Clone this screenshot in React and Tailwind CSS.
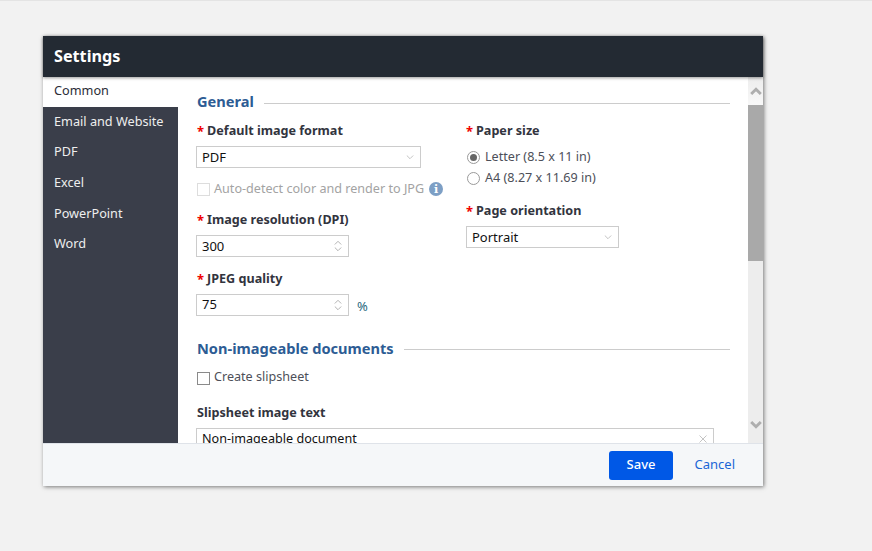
const Chev = ({ up, className, sw = 1, w = 10, h = 6 }) => (
  <svg width={w} height={h} viewBox="0 0 10 6" fill="none" stroke="currentColor" strokeWidth={sw} className={className}>
    <path d={up ? "M1 5.5L5 1.5L9 5.5" : "M1 0.5L5 4.5L9 0.5"} />
  </svg>
);

const Label = ({ children, req = true, className = "" }) => (
  <div className={`flex items-center h-[18px] text-[12.6px] font-bold text-[#32343e] leading-[18px] ${className}`}>
    {req && <span className="text-[#f00000] mr-[3px] text-[13px]">*</span>}
    {children}
  </div>
);

const Select = ({ w, value }) => (
  <div className={`${w} h-[22px] border border-[#cccccc] bg-white flex items-center justify-between pl-[5px] pr-[6px] text-[13px] text-[#111111]`}>
    <span className="mt-[2px]">{value}</span>
    <Chev className="text-[#b5b5b5]" w={8} h={5} />
  </div>
);

const Spin = ({ value, textClass }) => (
  <div className="w-[153px] h-[22px] border border-[#cccccc] bg-white flex items-center justify-between pl-[5px] pr-[6px] text-[13px] text-[#111111]">
    <span className={textClass}>{value}</span>
    <div className="flex flex-col gap-[2px] text-[#a0a0a0]">
      <Chev up w={8} h={5} />
      <Chev w={8} h={5} />
    </div>
  </div>
);

const Section = ({ children, lineClass }) => (
  <div className="flex items-center h-[20px] text-[14.6px] font-bold text-[#2d5c94]">
    <span>{children}</span>
    <div className={`flex-1 h-px bg-[#cccccc] ml-[10px] ${lineClass}`} />
  </div>
);

const NAV = ["Email and Website", "PDF", "Excel", "PowerPoint", "Word"];

export default function App() {
  return (
    <div className="w-[872px] h-[551px] bg-[#f2f2f2] border-t border-[#e4e4e4] pt-[35px] pl-[43px] overflow-hidden" style={{ fontFamily: '"Noto Sans", sans-serif' }}>
      <div className="w-[720px] h-[450px] flex flex-col bg-white shadow-[1px_1px_4px_rgba(0,0,0,0.5)]">
        <div className="h-[41px] shrink-0 bg-[#232a33] text-white text-[16.2px] font-bold flex items-center pl-[11px] pb-[1px] shadow-[0_1px_3px_rgba(0,0,0,0.4)] z-10">
          Settings
        </div>
        <div className="flex-1 flex min-h-0">
          <div className="w-[135px] shrink-0 bg-[#3a3e4a] text-[12.7px] text-[#eeeeee]">
            <div className="h-[30px] bg-white text-[#2b2e38] pl-[11px] flex items-center pb-[2px]">Common</div>
            {NAV.map((n) => (
              <div key={n} className="h-[30.6px] pl-[11px] flex items-center pb-[2px]">{n}</div>
            ))}
          </div>
          <div className="flex-1 min-w-0 overflow-hidden pl-[19px] pr-[18px] pt-[15px]">
            <Section lineClass="mt-[3px]">General</Section>
            <div className="flex mt-[10px]">
              <div className="w-[269px] shrink-0">
                <Label>Default image format</Label>
                <Select w="w-[225px] mt-[6px] -ml-px" value="PDF" />
                <div className="flex items-center h-[18px] mt-[12px] text-[12.6px] text-[#a3a3a3]">
                  <div className="w-[13px] h-[13px] border border-[#dddddd] mr-[4px] mt-[1px]" />
                  <span>Auto-detect color and render to JPG</span>
                  <span className="w-[14px] h-[14px] rounded-full bg-[#7d9fc5] text-white text-[11px] font-bold flex items-center justify-center ml-[5px] leading-none" style={{ fontFamily: '"DejaVu Serif", serif' }}>i</span>
                </div>
                <Label className="mt-[13px]">Image resolution (DPI)</Label>
                <div className="mt-[6px] -ml-px"><Spin value="300" textClass="mt-[2px]" /></div>
                <Label className="mt-[13px]">JPEG quality</Label>
                <div className="mt-[6px] -ml-px flex items-center">
                  <Spin value="75" textClass="mb-[2px]" />
                  <span className="ml-[8px] mt-[3px] text-[13px] text-[#2a6a80]">%</span>
                </div>
              </div>
              <div className="flex-1">
                <Label>Paper size</Label>
                <div className="flex items-center h-[21px] mt-[7px] text-[12.6px] text-[#4d4f59]">
                  <div className="w-[13px] h-[13px] rounded-full border border-[#9a9a9a] flex items-center justify-center mr-[5px] ml-[1px]">
                    <div className="w-[7px] h-[7px] rounded-full bg-[#666666]" />
                  </div>
                  <span className="-mt-[1px]">Letter (8.5 x 11 in)</span>
                </div>
                <div className="flex items-center h-[21px] text-[12.6px] text-[#4d4f59]">
                  <div className="w-[13px] h-[13px] rounded-full border border-[#9a9a9a] mr-[5px] ml-[1px]" />
                  <span className="-mt-[1px]">A4 (8.27 x 11.69 in)</span>
                </div>
                <Label className="mt-[13px]">Page orientation</Label>
                <Select w="w-[153px] mt-[6px]" value="Portrait" />
              </div>
            </div>
            <div className="mt-[22px]"><Section lineClass="mt-[1px]">Non-imageable documents</Section></div>
            <div className="flex items-center h-[18px] mt-[10px] text-[12.6px] text-[#4d4f59]">
              <div className="w-[13px] h-[13px] border border-[#8a8a8a] mr-[4px] mt-[1px]" />
              <span>Create slipsheet</span>
            </div>
            <Label req={false} className="mt-[17px]">Slipsheet image text</Label>
            <div className="mt-[6px] -ml-px w-[518px] h-[22px] border border-[#cccccc] flex items-center justify-between pl-[5px] pr-[6px] text-[12.6px] text-[#111111]">
              <span className="mt-[2px]">Non-imageable document</span>
              <svg width="8" height="8" viewBox="0 0 8 8" stroke="#c4c4c4" strokeWidth="1" fill="none">
                <path d="M0.5 0.5L7.5 7.5M7.5 0.5L0.5 7.5" />
              </svg>
            </div>
          </div>
          <div className="w-[15px] shrink-0 bg-[#ededed] flex flex-col items-center">
            <div className="w-full h-[28px] flex items-center justify-center bg-gradient-to-b from-[#ededed] to-[#f8f8f8] text-[#aeaeae]">
              <Chev up sw={2.4} w={12} h={8} />
            </div>
            <div className="w-full h-[156px] bg-[#a9a9a9]" />
            <div className="flex-1 w-full flex items-end justify-center pb-[14px] text-[#aeaeae]">
              <Chev sw={2.4} w={12} h={8} />
            </div>
          </div>
        </div>
        <div className="h-[43px] shrink-0 bg-[#f5f7f9] border-t border-[#dfe3e9] flex items-center justify-end pr-[28px] z-10">
          <div className="w-[64px] h-[29px] rounded-[3px] bg-[#0058e6] text-white text-[13px] font-medium flex items-center justify-center pl-[1px]">Save</div>
          <div className="ml-[22px] text-[13px] text-[#1a66d6]">Cancel</div>
        </div>
      </div>
    </div>
  );
}
